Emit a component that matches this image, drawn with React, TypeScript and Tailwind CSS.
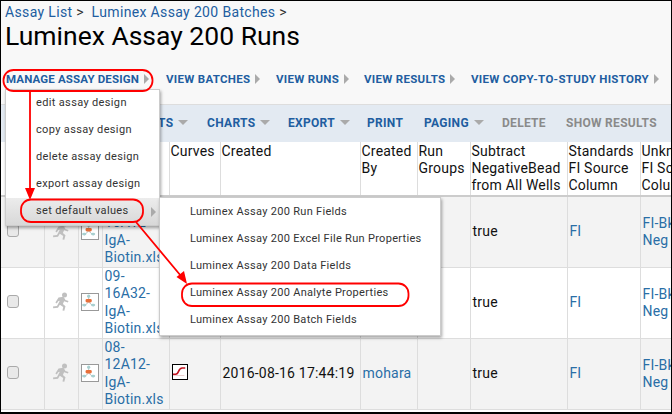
const font = { fontFamily: "Roboto, sans-serif" };

const topLinks = [
  { label: "VIEW BATCHES", width: 110 },
  { label: "VIEW RUNS", width: 88 },
  { label: "VIEW RESULTS", width: 107 },
  { label: "VIEW COPY-TO-STUDY HISTORY", width: 190 },
];

const RightCaret = () => <span className="ml-[5px] inline-block h-0 w-0 border-y-[5px] border-l-[5px] border-y-transparent border-l-[#aaa]" />;
const DownCaret = () => <span className="ml-[5px] inline-block h-0 w-0 border-x-[5px] border-t-[5px] border-x-transparent border-t-[#aaa]" />;

const Runner = () => (
  <svg width="18" height="19" viewBox="0 0 18 19" fill="#c0c0c0" className="-mt-[2px]">
    <circle cx="12.500" cy="3" r="2.500" />
    <path d="M6.500 5.500l5-.8 2 3.200 3 1-.6 1.500-3.800-1.200-1.200 2.800 2.600 2.200-1.200 4.600-1.800-.4.700-3.400-3.400-2.200-1.800 3-4.800.4-.2-1.600 4-.6 2.800-5.200-1.600.4-1.400 2.200-1.400-.8z" />
  </svg>
);

const GraphIcon = () => (
  <svg width="18" height="18" viewBox="0 0 18 18" className="-mt-[2px] border-[1.500px] border-[#999] bg-white">
    <path d="M7.500 3v5M7.500 9l-5 4.500M7.500 9l5 4.500" stroke="#9aa8a8" strokeWidth="0.800" fill="none" />
    <circle cx="7.500" cy="2.500" r="1.800" fill="#a8d0d0" />
    <rect x="4" y="5.500" width="7" height="4" rx="1.500" fill="#e8703a" />
    <ellipse cx="2.500" cy="12.500" rx="2.400" ry="1.500" fill="#a8d0d0" />
    <ellipse cx="12.500" cy="12.500" rx="2.400" ry="1.500" fill="#a8d0d0" />
  </svg>
);

const CurveIcon = () => (
  <svg width="16" height="16" viewBox="0 0 16 16" className="-mt-[3px] border-[1.500px] border-black bg-white">
    <path d="M0 10.500h3c2 0 2.500-1 3.500-3.500S8.500 3.500 10.500 3.500H14" stroke="#c1121f" strokeWidth="1.800" fill="none" />
    <path d="M0 12h13" stroke="#d9a0a0" strokeWidth="0.600" />
  </svg>
);

const columns = [43, 34, 24, 67, 51, 140, 57, 53, 97, 73, 40];
const headers = [[], [], [], [], ["Curves"], ["Created"], ["Created", "By"], ["Run", "Groups"], ["Subtract", "NegativeBead", "from All Wells"], ["Standards", "FI Source", "Column"], ["Unknowns", "FI Source", "Column"]];

const rows = [
  { file: ["10-", "16A12-", "IgA-", "Biotin.xls"], curve: false, date: "", by: "" },
  { file: ["09-", "16A32-", "IgA-", "Biotin.xls"], curve: false, date: "", by: "" },
  { file: ["08-", "12A12-", "IgA-", "Biotin.xls"], curve: true, date: "2016-08-16 17:44:19", by: "mohara" },
];

const menu1 = ["edit assay design", "copy assay design", "delete assay design", "export assay design"];
const menu2 = [
  "Luminex Assay 200 Run Fields",
  "Luminex Assay 200 Excel File Run Properties",
  "Luminex Assay 200 Data Fields",
  "Luminex Assay 200 Analyte Properties",
  "Luminex Assay 200 Batch Fields",
];

const Annotations = () => (
  <svg className="absolute left-[-1px] top-[-1px]" width="672" height="414" fill="none" stroke="#f00" strokeWidth="1.800">
    <rect x="3.500" y="70" width="149" height="21" rx="10" />
    <rect x="21" y="199.500" width="122" height="22.500" rx="10" />
    <rect x="182" y="283.500" width="226.500" height="22.500" rx="10" />
    <path d="M30 91v100M136 222l45 54" />
    <path d="M25 188h10l-5 12z" fill="#f00" stroke="none" />
    <path d="M176.500 277l7.500-6 3 13z" fill="#f00" stroke="none" />
  </svg>
);

export default function App() {
  return (
    <div className="relative h-[414px] w-[672px] overflow-hidden border-b-2 border-l border-r border-t border-black bg-white" style={font}>
      <div className="bg-[#f8f8f8]">
        <div className="h-[59px] pl-[4px] pt-[2px]">
          <div className="whitespace-nowrap text-[14px] leading-[18px] tracking-[0.35px] text-[#215da0]">
            Assay List <span className="text-[#333]">&gt;</span>&nbsp; Luminex Assay 200 Batches <span className="text-[#333]">&gt;</span>
          </div>
          <div className="-mt-[1px] whitespace-nowrap text-[26.500px] leading-[32px] text-black">Luminex Assay 200 Runs</div>
        </div>
        <div className="flex h-[45px] items-start whitespace-nowrap border-b border-[#ddd] pl-[5px] pt-[9px] text-[11.500px] font-bold leading-[20px] tracking-[0.3px] text-[#215da0]">
          <span className="flex w-[160px] items-center tracking-[0.15px]">MANAGE ASSAY DESIGN<RightCaret /></span>
          {topLinks.map((l) => (
            <span key={l.label} className="flex items-center" style={{ width: l.width }}>{l.label}<RightCaret /></span>
          ))}
        </div>
      </div>
      <div className="flex h-[37px] items-center whitespace-nowrap bg-[#e3eaf2] pb-[2px] pl-[157px] text-[12px] font-bold tracking-[0.3px] text-[#215da0]">
        <span className="flex w-[49px] items-center">TS<DownCaret /></span>
        <span className="flex w-[81px] items-center">CHARTS<DownCaret /></span>
        <span className="flex w-[79px] items-center">EXPORT<DownCaret /></span>
        <span className="w-[57px]">PRINT</span>
        <span className="flex w-[78px] items-center">PAGING<DownCaret /></span>
        <span className="w-[64px] text-[#8a8a8a]">DELETE</span>
        <span className="text-[#8a8a8a]">SHOW RESULTS</span>
      </div>
      <table className="table-fixed border-collapse text-[14px] leading-[17px]" style={{ width: 679 }}>
        <colgroup>
          {columns.map((w, i) => <col key={i} style={{ width: w }} />)}
        </colgroup>
        <thead>
          <tr className="h-[54px] border-b-2 border-[#ccc]">
            {headers.map((h, i) => (
              <th key={i} className="overflow-hidden whitespace-nowrap border-r border-[#ddd] px-[1px] pt-[1px] text-left align-top font-normal tracking-[0.2px] text-[#111]">
                {h.map((line) => <div key={line}>{line}</div>)}
              </th>
            ))}
          </tr>
        </thead>
        <tbody>
          {rows.map((r, i) => (
            <tr key={i} className={`h-[71px] border-b border-[#ddd] ${i % 2 === 0 ? "bg-[#f3f3f3]" : "bg-white"}`}>
              <td className="border-r border-[#ddd] pl-[6px]">
                <span className="-mt-[3px] block h-[13px] w-[12px] rounded-[3px] border border-[#aaa] bg-[#e9e9e9]" />
              </td>
              <td className="border-r border-[#ddd]"><div className="flex justify-center"><Runner /></div></td>
              <td className="border-r border-[#ddd]"><div className="flex justify-center"><GraphIcon /></div></td>
              <td className="overflow-hidden whitespace-nowrap border-r border-[#ddd] pl-[2px] leading-[17.400px] tracking-[0.2px] text-[#2a6ea6]">
                {r.file.map((line) => <div key={line}>{line}</div>)}
              </td>
              <td className="border-r border-[#ddd] pl-[2px]">{r.curve && <CurveIcon />}</td>
              <td className="whitespace-nowrap border-r border-[#ddd] pl-[2px] tracking-[0.2px] text-[#111]">{r.date}</td>
              <td className="border-r border-[#ddd] pl-[2px] tracking-[0.2px] text-[#2a6ea6]">{r.by}</td>
              <td className="border-r border-[#ddd]" />
              <td className="border-r border-[#ddd] pl-[2px] tracking-[0.2px] text-[#111]">true</td>
              <td className="border-r border-[#ddd] pl-[2px] text-[#2a6ea6]">FI</td>
              <td className="overflow-hidden whitespace-nowrap pl-[2px] tracking-[0.2px] text-[#2a6ea6]">FI-Bkgd<br />Neg</td>
            </tr>
          ))}
        </tbody>
      </table>

      <div className="absolute left-[4px] top-[88px] w-[155px] border border-[#ccc] bg-white shadow-[1px_2px_3px_rgba(0,0,0,0.35)]">
        {menu1.map((m) => (
          <div key={m} className="flex h-[27px] items-center pl-[30px] text-[11px] tracking-[0.35px] text-[#333]">{m}</div>
        ))}
        <div className="flex h-[27px] items-center justify-between bg-gradient-to-b from-[#ececec] to-[#d8d8d8] pl-[30px] pr-[3px] text-[11px] tracking-[0.35px] text-[#333]">
          set default values<RightCaret />
        </div>
      </div>
      <div className="absolute left-[158px] top-[196px] w-[282px] border border-[#ccc] bg-white py-[1px] shadow-[1px_2px_3px_rgba(0,0,0,0.35)]">
        {menu2.map((m) => (
          <div key={m} className="flex h-[27px] items-center whitespace-nowrap pl-[30px] text-[11px] tracking-[0.3px] text-[#333]">{m}</div>
        ))}
      </div>
      <Annotations />
    </div>
  );
}
